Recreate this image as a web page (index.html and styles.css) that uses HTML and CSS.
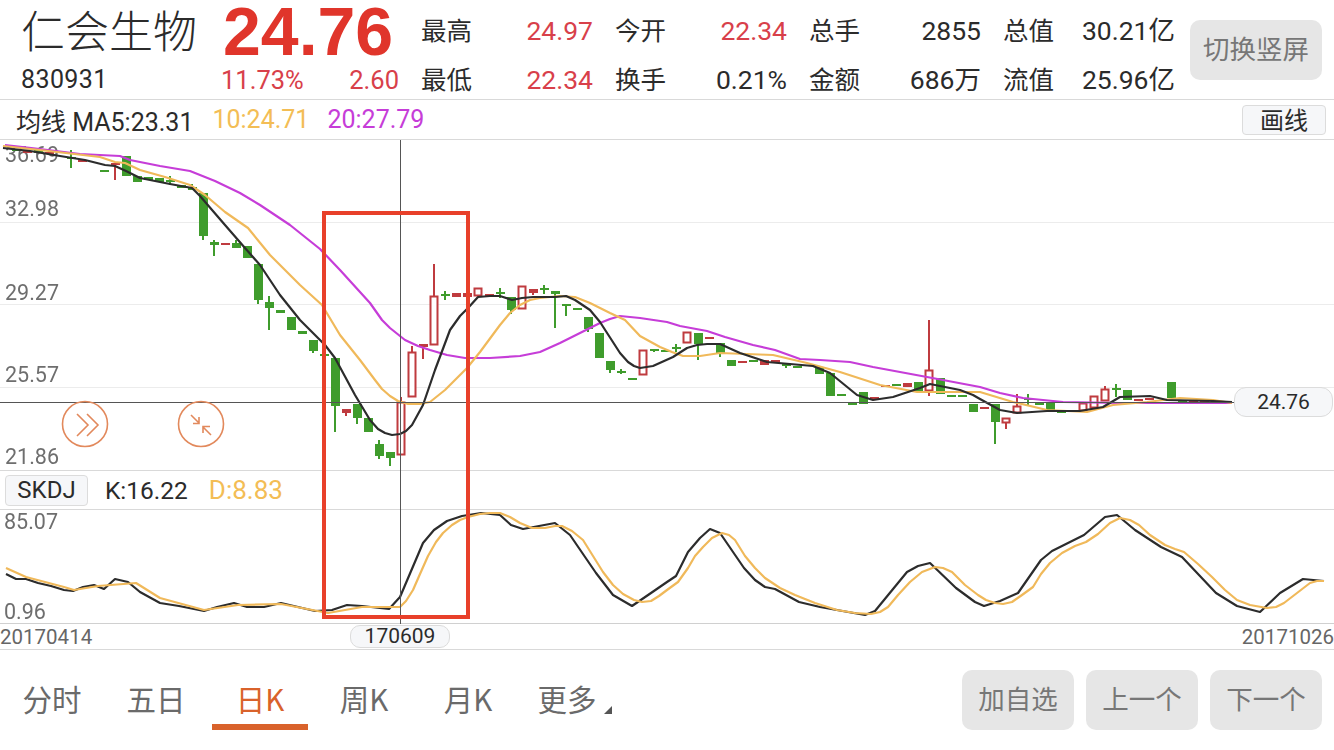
FILE: index.html
```html
<!DOCTYPE html>
<html lang="zh-CN">
<head>
<meta charset="utf-8">
<title>仁会生物 K线</title>
<link rel="stylesheet" href="styles.css">
</head>
<body>
<div class="app">
  <header class="quote">
    <div class="identity">
      <div class="name">仁会生物</div>
      <div class="code">830931</div>
    </div>
    <div class="price">
      <div class="last">24.76</div>
      <div class="change"><span>11.73%</span><span>2.60</span></div>
    </div>
    <div class="stats">
      <div class="stat"><span>最高</span><b class="up">24.97</b></div>
      <div class="stat"><span>今开</span><b class="up">22.34</b></div>
      <div class="stat"><span>总手</span><b>2855</b></div>
      <div class="stat"><span>总值</span><b>30.21亿</b></div>
      <div class="stat"><span>最低</span><b class="up">22.34</b></div>
      <div class="stat"><span>换手</span><b>0.21%</b></div>
      <div class="stat"><span>金额</span><b>686万</b></div>
      <div class="stat"><span>流值</span><b>25.96亿</b></div>
    </div>
    <button class="grey-btn rotate">切换竖屏</button>
  </header>

  <div class="ma-row">
    <span class="ma5">均线 MA5:23.31</span>
    <span class="ma10">10:24.71</span>
    <span class="ma20">20:27.79</span>
    <button class="tool-btn draw">画线</button>
  </div>

  <div class="main-chart">
    <svg class="chart-svg" width="1334" height="331" viewBox="0 140 1334 331">
      <path class="grid" d="M0 222.5H1334M0 304.5H1334M0 387.5H1334"/>
      <path class="sep" d="M0 470.5H1334"/>
      <text class="axis" x="5" y="162">36.69</text>
      <text class="axis" x="5" y="216">32.98</text>
      <text class="axis" x="5" y="300">29.27</text>
      <text class="axis" x="5" y="382">25.57</text>
      <text class="axis" x="5" y="464">21.86</text>

      <path class="wick-green" d="M71 150V168M170 176V185M192 184V190M203 236V240M214 240V256M236 240V244M258 300V304M269 296V330M313 351V353M335 406V432M357 418V424M379 440V459M390 458V466M445 291V300M500 288V298M511 310V314M544 285V294M555 294V328M566 305V316M588 329V332M610 370V373M621 369V374M654 351V352M676 344V352M698 344V360M720 354V357M786 366V368M995 422V444M1028 394V405M1116 384V397"/>
      <path class="body-green" d="M12 149h9v2h-9zM34 150h9v3h-9zM67 157h9v2h-9zM100 170h9v2h-9zM122 156h9v20h-9zM133 176h9v6h-9zM144 177h9v3h-9zM155 178h9v4h-9zM166 180h9v2h-9zM177 185h9v3h-9zM188 187h9v3h-9zM199 193h9v43h-9zM210 242h9v3h-9zM232 243h9v5h-9zM243 246h9v12h-9zM254 264h9v36h-9zM265 302h9v6h-9zM276 310h9v3h-9zM287 317h9v13h-9zM298 331h9v3h-9zM309 340h9v11h-9zM320 354h9v2h-9zM331 358h9v48h-9zM353 404h9v14h-9zM364 418h9v14h-9zM375 444h9v12h-9zM386 452h9v6h-9zM441 294h9v2h-9zM496 292h9v2h-9zM507 297h9v13h-9zM540 288h9v2h-9zM551 291h9v3h-9zM562 304h9v2h-9zM573 308h9v2h-9zM584 317h9v12h-9zM595 333h9v25h-9zM606 361h9v9h-9zM617 371h9v2h-9zM628 378h9v2h-9zM650 349h9v2h-9zM661 350h9v2h-9zM672 347h9v2h-9zM694 333h9v11h-9zM716 343h9v11h-9zM727 360h9v6h-9zM749 360h9v2h-9zM782 363h9v3h-9zM793 366h9v2h-9zM815 367h9v7h-9zM826 373h9v23h-9zM837 394h9v2h-9zM848 403h9v2h-9zM859 392h9v12h-9zM892 384h9v2h-9zM914 382h9v9h-9zM936 378h9v16h-9zM947 395h9v2h-9zM958 395h9v2h-9zM969 404h9v8h-9zM991 404h9v18h-9zM1024 398h9v2h-9zM1035 403h9v2h-9zM1046 402h9v9h-9zM1057 411h9v2h-9zM1112 388h9v2h-9zM1123 390h9v10h-9zM1167 382h9v16h-9zM1178 400h9v2h-9z"/>
      <path class="wick-red" d="M115 163V180M346 413V416M401 397V402M412 346V352M423 347V359M434 264V296M533 293V295M929 320V370M929 390V396M1006 422V429M1017 394V406M1105 386V389"/>
      <path class="body-red" d="M23 151h9v2h-9zM45 152h9v2h-9zM78 160h9v2h-9zM111 163h9v2h-9zM221 243h9v2h-9zM342 409h9v4h-9zM419 344h9v3h-9zM452 293h9v4h-9zM463 293h9v4h-9zM485 294h9v2h-9zM529 289h9v4h-9zM705 337h9v2h-9zM738 361h9v2h-9zM760 360h9v5h-9zM771 360h9v3h-9zM870 397h9v2h-9zM881 385h9v2h-9zM903 383h9v4h-9zM980 407h9v2h-9zM1134 399h9v2h-9zM1145 398h9v2h-9zM1189 400h9v2h-9zM1200 401h9v2h-9zM1211 401h9v2h-9zM1222 402h9v2h-9z"/>
      <path class="hollow-red" d="M397.500 402.500h7v52h-7zM408.500 352.500h7v44h-7zM430.500 296.500h7v48h-7zM474.500 288.500h7v7h-7zM518.500 286.500h7v22h-7zM639.500 350.500h7v24h-7zM683.500 332.500h7v10h-7zM925.500 370.500h7v20h-7zM1002.500 418.500h7v4h-7zM1013.500 406.500h7v6h-7zM1079.500 403.500h7v7h-7zM1090.500 396.500h7v11h-7zM1101.500 389.500h7v11h-7z"/>

      <polyline class="line ma20-line" points="5,145 40,149 80,154 120,156 130,160 160,166 190,171 215,181 240,193 260,205 290,225 320,249 340,270 370,303 382,320 390,328 405,340 418,346 430,350 447,355 465,358 490,358 520,356 540,352 560,343 580,333 600,323 610,319 620,316 640,318 667,322 680,326 707,331 725,337 753,345 775,350 800,359 820,360 850,362 873,367 927,377 980,387 1000,393 1023,398 1063,402 1120,403 1232,403"/>
      <polyline class="line ma10-line" points="3,146 40,150 100,157 115,162 125,163 140,170 165,177 190,185 205,195 225,212 248,228 270,255 300,285 322,305 340,335 360,360 375,380 382,389 390,396 398,401 408,404 420,404 430,402 445,390 467,368 480,352 500,325 510,313 520,305 530,300 540,298 560,296 575,297 590,303 610,313 625,320 640,336 660,347 672,352 683,356 700,356 720,353 773,355 807,363 840,372 880,385 917,392 980,392 1013,402 1047,410 1087,412 1113,405 1147,402 1180,398 1213,400 1232,403"/>
      <polyline class="line ma5-line" points="3,148 30,151 60,156 85,160 105,165 115,166 126,171 140,178 170,184 192,188 200,196 225,225 245,248 260,265 280,295 300,320 325,345 335,358 355,395 370,420 378,429 385,433 392,435 400,434 406,431 412,425 423,405 435,370 450,330 460,316 468,308 478,297 490,296 500,296 512,300 522,298 533,297 555,297 566,296 575,300 590,310 600,322 620,353 628,362 634,366 640,368 653,366 673,357 687,348 697,345 707,344 720,344 740,353 767,362 813,366 830,373 857,395 873,400 893,397 920,388 930,384 960,390 973,395 980,399 1000,410 1017,413 1047,411 1080,411 1103,407 1120,397 1150,396 1167,400 1213,401 1232,402"/>

      <path class="cross" d="M0 402.500H1234"/>
      <circle class="ring" cx="85" cy="424" r="22.500"/>
      <path class="ring" d="M77 414L88 425L77 436M87 414L98 425L87 436"/>
      <circle class="ring" cx="201" cy="424" r="22.500"/>
      <path class="ring" d="M191 415L199 423M199 417V423.500H193M211 435L203 427M203 433V426.500H210"/>
    </svg>
    <div class="price-tag">24.76</div>
  </div>

  <div class="kdj-row">
    <button class="tool-btn kdj">SKDJ</button>
    <span class="k">K:16.22</span>
    <span class="d">D:8.83</span>
  </div>

  <div class="sub-chart">
    <svg class="chart-svg" width="1334" height="113" viewBox="0 510 1334 113">
      <text class="axis" x="4" y="529">85.07</text>
      <text class="axis" x="4" y="619">0.96</text>
      <polyline class="line k-line" points="6,574 16,579 26,579 38,583 51,586 64,590 73,591 83,587 94,585 104,589 115,579 128,582 140,592 160,603 179,606 204,611 217,607 234,603 247,607 264,607 281,603 298,607 315,611 332,610 347,605 362,606 389,609 400,597 423,543 434,530 447,521 462,516 481,513 500,515 511,525 523,529 555,523 570,535 596,573 613,595 632,606 651,593 667,582 676,576 688,552 700,538 710,529 720,533 744,568 755,580 765,587 775,589 799,602 820,607 865,615 875,611 907,572 918,566 930,563 956,588 975,602 984,606 1000,601 1018,593 1041,560 1052,551 1084,535 1105,517 1117,515 1135,530 1161,547 1182,557 1216,593 1237,606 1260,612 1280,593 1303,579 1324,581"/>
      <polyline class="line d-line" points="6,568 26,577 64,587 74,590 98,586 136,583 160,598 204,610 238,605 281,604 328,613 362,607 400,607 406,601 413,590 420,574 428,556 436,542 443,533 452,525 460,520 468,517 480,514 490,513 500,513 510,517 520,523 532,528 545,528 555,526 562,526 572,531 583,540 593,556 603,572 613,585 623,594 634,600 642,602 651,601 659,596 667,590 678,582 688,568 695,556 703,547 712,538 722,533 729,535 735,540 745,556 755,568 765,578 780,588 795,595 815,603 837,610 855,613 871,614 880,612 888,607 898,595 910,582 922,572 935,567 943,568 952,572 965,585 978,595 986,600 995,603 1003,604 1012,602 1022,595 1033,587 1041,574 1050,563 1062,553 1075,546 1086,542 1098,534 1110,523 1120,518 1130,520 1139,525 1150,535 1165,545 1175,549 1184,552 1198,564 1212,577 1225,590 1237,600 1250,605 1267,608 1276,607 1284,603 1297,593 1310,583 1317,581 1324,581"/>
    </svg>
  </div>

  <div class="date-row">
    <span>20170414</span>
    <span class="date-badge">170609</span>
    <span>20171026</span>
  </div>

  <footer class="bottom">
    <nav class="tabs">
      <span class="tab">分时</span>
      <span class="tab">五日</span>
      <span class="tab active">日K</span>
      <span class="tab">周K</span>
      <span class="tab">月K</span>
      <span class="tab more">更多</span>
    </nav>
    <div class="actions">
      <button class="grey-btn">加自选</button>
      <button class="grey-btn">上一个</button>
      <button class="grey-btn">下一个</button>
    </div>
  </footer>

  <div class="v-cross"></div>
  <div class="red-box"></div>
</div>
</body>
</html>
```

FILE: styles.css
```css
* { box-sizing: border-box; }
html, body { margin: 0; padding: 0; background: #fff; }
body, button {
  font-family: Roboto, "Noto Sans CJK SC", sans-serif;
  color: #2b2b2b;
}
.app {
  position: relative;
  width: 1334px;
  height: 750px;
  overflow: hidden;
}

/* header */
.quote {
  display: flex;
  height: 100px;
  border-bottom: 1px solid #d9d9d9;
}
.identity, .price {
  display: grid;
  grid-template-rows: 38px 38px;
  row-gap: 11px;
  padding-top: 12px;
  align-items: center;
}
.identity { width: 221px; padding-left: 21px; }
.name {
  font: 300 44px/34px "Noto Sans CJK SC", sans-serif;
  white-space: nowrap;
  padding-bottom: 4px;
}
.code { font-size: 25px; line-height: 38px; letter-spacing: 0.4px; }
.price { width: 178px; margin-right: 22px; color: #e0352b; }
.last {
  font: 700 68px/38px "Liberation Sans", sans-serif;
  padding-left: 2px;
}
.change {
  display: flex;
  justify-content: space-between;
  font-size: 25.500px;
  line-height: 38px;
  color: #d8404a;
}
.stats {
  display: grid;
  grid-template-columns: repeat(4, 172px);
  grid-template-rows: 38px 38px;
  column-gap: 22px;
  row-gap: 11px;
  padding-top: 12px;
  width: 754px;
}
.stat {
  display: flex;
  justify-content: space-between;
  align-items: center;
  font-size: 26.500px;
  line-height: 38px;
}
.stat span {
  font-family: "Noto Sans CJK SC", sans-serif;
  font-size: 25.500px;
  line-height: 34px;
  padding-bottom: 4px;
}
.stat b { font-weight: 400; white-space: nowrap; }
.stat .up { color: #d8404a; }
.grey-btn {
  width: 112px;
  height: 60px;
  border: 0;
  border-radius: 10px;
  padding: 0 0 5px;
  background: #e6e6e6;
  color: #777;
  font: 400 26.500px "Noto Sans CJK SC", sans-serif;
}
.rotate { width: 132px; margin: 20px 0 0 15px; }

/* MA legend */
.ma-row {
  display: flex;
  align-items: center;
  height: 40px;
  padding: 0 8px 0 16px;
  border-bottom: 1px solid #d9d9d9;
  font-size: 25px;
}
.ma5 { margin-right: 19px; }
.ma10 { color: #f3bd55; margin-right: 18px; }
.ma20 { color: #c63dd8; }
.tool-btn {
  background: #f6f7f9;
  border: 1px solid #dcdcdc;
  border-radius: 4px;
  padding: 0;
  font: 400 24px "Noto Sans CJK SC", sans-serif;
}
.draw { width: 84px; height: 30px; margin-left: auto; line-height: 26px; padding-bottom: 2px; }

/* charts */
.main-chart { position: relative; height: 331px; }
.sub-chart { height: 114px; border-bottom: 1px solid #d0d0d0; }
.chart-svg { display: block; filter: blur(0.35px); }
.grid { stroke: #ececec; stroke-width: 1; fill: none; }
.sep { stroke: #d9d9d9; stroke-width: 1; fill: none; }
.axis { font: 400 21.500px Roboto, sans-serif; fill: #6e6e6e; }
.wick-green { stroke: #3f9c2c; stroke-width: 2; fill: none; }
.body-green { fill: #3f9c2c; }
.wick-red { stroke: #bf3b3f; stroke-width: 2; fill: none; }
.body-red { fill: #bf3b3f; }
.hollow-red { stroke: #bf3b3f; stroke-width: 2; fill: #fff; }
.line { fill: none; stroke-width: 2.200; stroke-linejoin: round; }
.ma5-line, .k-line { stroke: #2c2c2c; }
.ma10-line, .d-line { stroke: #f0b95a; }
.ma20-line { stroke: #c63dd8; }
.cross { stroke: #555; stroke-width: 1; fill: none; }
.ring { stroke: #e2895c; stroke-width: 1.600; fill: none; }
.price-tag {
  position: absolute;
  left: 1234px;
  top: 247px;
  width: 99px;
  height: 30px;
  border: 1px solid #dcdcdc;
  border-radius: 12px;
  background: #f6f7f9;
  text-align: center;
  font-size: 21px;
  line-height: 28px;
}

/* KDJ legend */
.kdj-row {
  display: flex;
  align-items: center;
  height: 39px;
  padding-left: 5px;
  border-bottom: 1px solid #d9d9d9;
  font-size: 24.500px;
}
.kdj { width: 83px; height: 31px; font-family: Roboto, sans-serif; font-size: 24px; line-height: 29px; margin-right: 17px; }
.k { margin-right: 21px; }
.d { color: #f3bd55; font-size: 26px; }

/* date axis */
.date-row {
  position: relative;
  display: flex;
  justify-content: space-between;
  align-items: center;
  height: 26px;
  border-bottom: 1px solid #d9d9d9;
  font-size: 20.500px;
  color: #666;
}
.date-badge {
  position: absolute;
  left: 350px;
  top: 1px;
  width: 100px;
  height: 23px;
  border: 1px solid #dcdcdc;
  border-radius: 10px;
  background: #f6f7f9;
  color: #2b2b2b;
  text-align: center;
  font-size: 21px;
  line-height: 21px;
}

/* footer */
.bottom {
  display: flex;
  justify-content: space-between;
  height: 100px;
  padding: 20px 12px 0 0;
}
.tabs { display: flex; height: 60px; }
.tab {
  width: 96px;
  margin: 0 4px;
  text-align: center;
  font: 400 29.500px/56px "Noto Sans CJK SC", sans-serif;
  color: #6a6a6a;
  position: relative;
}
.active { color: #d9622b; height: 60px; }
.active::after {
  content: "";
  position: absolute;
  left: 0;
  right: 0;
  top: 54px;
  height: 6px;
  background: #d9622b;
}
.more { margin-left: -1px; }
.more::after {
  content: "";
  position: absolute;
  left: 85px;
  top: 36px;
  border-style: solid;
  border-width: 0 0 8px 8px;
  border-color: transparent transparent #555 transparent;
}
.actions { display: flex; gap: 12px; }

/* overlays */
.v-cross {
  position: absolute;
  left: 400px;
  top: 140px;
  width: 1px;
  height: 484px;
  background: #555;
}
.red-box {
  position: absolute;
  left: 322px;
  top: 211px;
  width: 148px;
  height: 408px;
  border: 4px solid #e8402a;
}
```
